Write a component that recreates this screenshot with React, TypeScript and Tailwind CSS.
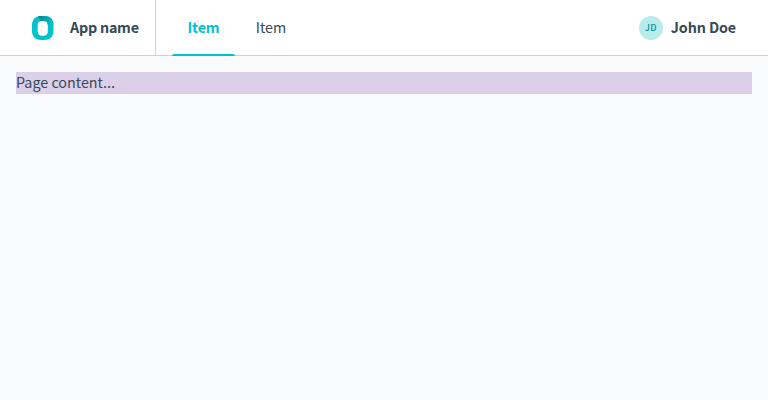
function Logo() {
  return (
    <svg className="h-6 w-[22px] shrink-0" viewBox="0 0 22 24" fill="none">
      <defs>
        <linearGradient id="ring" x1="7" y1="3" x2="20" y2="7" gradientUnits="userSpaceOnUse">
          <stop stopColor="#008b96" />
          <stop offset="1" stopColor="#00c2cb" />
        </linearGradient>
      </defs>
      <path
        fill="#00c2cb"
        fillRule="evenodd"
        d="M9.500 0h2.500c6 0 9.500 3.300 9.500 9v6c0 5.700-3.500 9-9.500 9H9.500C3.500 24 0 20.700 0 15V9C0 3.300 3.500 0 9.500 0Zm.5 5C7 5 5.700 6.500 5.700 9v6.500c0 2.500 1.300 4.300 4.300 4.300h1.500c3 0 4.300-1.800 4.300-4.300V9c0-2.500-1.300-4-4.300-4H10Z"
      />
      <path fill="url(#ring)" d="M6 .45C7 .15 8.200 0 9.500 0H12c6 0 9.500 3.300 9.500 9h-5.700c0-2.500-1.300-4-4.300-4H10c-.7 0-1.300.1-1.800.3Z" />
    </svg>
  );
}

export default function App() {
  return (
    <div className="min-h-screen bg-[#fafbfd] font-['Noto_Sans_CJK_SC',sans-serif] text-[14.300px] leading-[22px] text-[#364a56]">
      <header className="flex h-14 border-b border-[#c8d3dc] bg-white">
        <div className="flex w-[156px] items-center gap-4 border-r border-[#c8d3dc] pl-8">
          <Logo />
          <span className="whitespace-nowrap pb-0.5 font-bold tracking-[-0.22px]">App name</span>
        </div>
        <nav className="-mb-px flex pl-4">
          <a className="relative flex w-[63px] items-center justify-center pb-[3px] font-bold tracking-[-0.15px] text-[#00c2cb]">
            Item
            <span className="absolute inset-x-0 bottom-0 h-0.5 rounded-t-sm bg-[#00c2cb]" />
          </a>
          <a className="ml-1 flex w-16 items-center justify-center pb-[3px]">Item</a>
        </nav>
        <div className="ml-auto flex items-center gap-2 pr-8">
          <span className="flex size-6 items-center justify-center rounded-full bg-[#b8ecec] text-[9px] font-medium tracking-[0.3px] text-[#008f9c]">JD</span>
          <span className="whitespace-nowrap pb-0.5 font-bold tracking-[-0.12px]">John Doe</span>
        </div>
      </header>
      <main className="p-4">
        <div className="h-[22px] bg-[#dccfe9] leading-5">Page content...</div>
      </main>
    </div>
  );
}
